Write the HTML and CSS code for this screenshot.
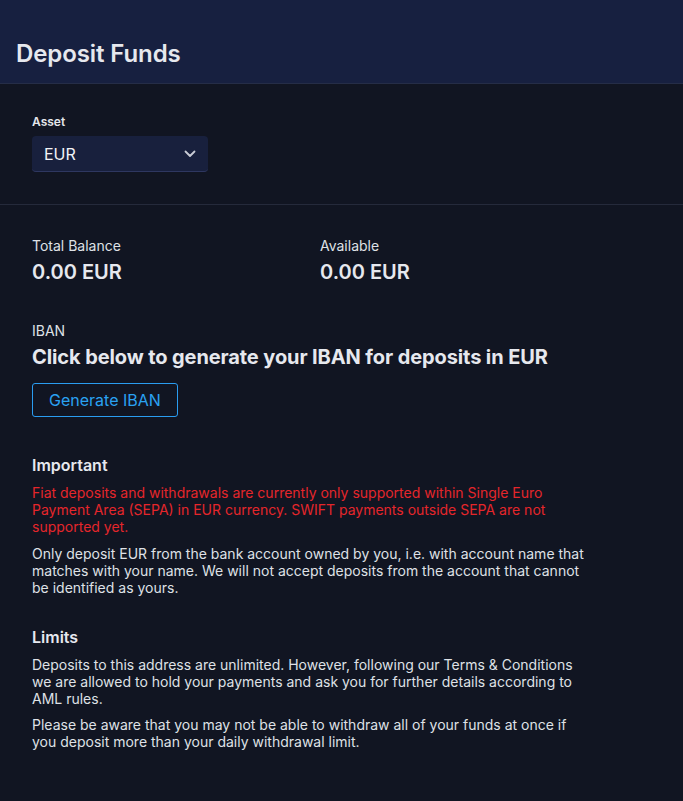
FILE: index.html
```html
<!DOCTYPE html>
<html lang="en">
<head>
<meta charset="utf-8">
<title>Deposit Funds</title>
<link rel="stylesheet" href="styles.css">
</head>
<body>
<header class="page-header">
  <h1 class="page-title">Deposit Funds</h1>
</header>
<main class="page">
  <section class="asset-section">
    <label class="field-label" for="asset">Asset</label>
    <div class="select">
      <span class="select-value">EUR</span>
      <svg class="select-caret" width="12" height="8" viewBox="0 0 12 8" aria-hidden="true"><path d="M1.5 1.5 L6 6 L10.5 1.5" fill="none" stroke="#c9ccd6" stroke-width="1.8" stroke-linecap="round" stroke-linejoin="round"/></svg>
    </div>
  </section>
  <section class="content">
    <div class="balances">
      <div class="balance">
        <div class="balance-label">Total Balance</div>
        <div class="balance-value">0.00 EUR</div>
      </div>
      <div class="balance">
        <div class="balance-label">Available</div>
        <div class="balance-value">0.00 EUR</div>
      </div>
    </div>
    <div class="iban">
      <div class="iban-label">IBAN</div>
      <h2 class="iban-title">Click below to generate your IBAN for deposits in EUR</h2>
      <button class="btn-outline" type="button">Generate IBAN</button>
    </div>
    <div class="info">
      <h3 class="info-title">Important</h3>
      <p class="text warn">Fiat deposits and withdrawals are currently only supported within Single Euro Payment Area (SEPA) in EUR currency. SWIFT payments outside SEPA are not supported yet.</p>
      <p class="text">Only deposit EUR from the bank account owned by you, i.e. with account name that matches with your name. We will not accept deposits from the account that cannot be identified as yours.</p>
    </div>
    <div class="info">
      <h3 class="info-title">Limits</h3>
      <p class="text">Deposits to this address are unlimited. However, following our Terms &amp; Conditions we are allowed to hold your payments and ask you for further details according to AML rules.</p>
      <p class="text">Please be aware that you may not be able to withdraw all of your funds at once if you deposit more than your daily withdrawal limit.</p>
    </div>
  </section>
</main>
</body>
</html>
```
FILE: styles.css
```css
* { box-sizing: border-box; }
html, body { margin: 0; padding: 0; }
body {
  background: #111522;
  color: #e4e6ea;
  font-family: Inter, "Noto Sans", sans-serif;
  min-height: 801px;
}
.page-header {
  background: #172040;
  height: 84px;
  border-bottom: 1px solid #252d47;
  display: flex;
  align-items: flex-end;
  padding: 0 16px 14px;
}
.page-title {
  margin: 0;
  font-size: 24px;
  font-weight: 600;
  line-height: 30px;
  color: #e6e8ee;
  letter-spacing: -0.1px;
}
.asset-section {
  padding: 30px 32px 32px;
  border-bottom: 1px solid #252a3b;
}
.field-label {
  display: block;
  font-size: 12px;
  font-weight: 600;
  line-height: 16px;
  color: #e4e6ea;
  margin-bottom: 6px;
}
.select {
  width: 176px;
  height: 36px;
  background: #18203d;
  border-radius: 4px;
  border-bottom: 1px solid #2e3760;
  display: flex;
  align-items: center;
  justify-content: space-between;
  padding: 0 12px 0 12px;
}
.select-value {
  font-size: 16px;
  color: #f2f3f6;
}
.content {
  padding: 32px 32px 40px;
}
.balances {
  display: grid;
  grid-template-columns: 288px 1fr;
}
.balance-label {
  font-size: 14px;
  line-height: 18px;
  color: #dfe1e6;
}
.balance-value {
  margin-top: 5px;
  font-size: 20px;
  font-weight: 600;
  line-height: 24px;
  color: #e6e8ee;
}
.iban {
  margin-top: 38px;
}
.iban-label {
  font-size: 14px;
  line-height: 18px;
  color: #dfe1e6;
}
.iban-title {
  margin: 5px 0 0;
  font-size: 20px;
  font-weight: 700;
  line-height: 24px;
  color: #e6e8ee;
  letter-spacing: -0.1px;
}
.btn-outline {
  margin-top: 14px;
  height: 34px;
  padding: 0 16px;
  background: transparent;
  border: 1px solid #2a9cf0;
  border-radius: 3px;
  color: #2aa2f2;
  font-family: Inter, "Noto Sans", sans-serif;
  font-size: 16px;
  line-height: 20px;
}
.info {
  margin-top: 38px;
  max-width: 558px;
}
.info-title {
  margin: 0 0 9px;
  font-size: 16px;
  font-weight: 600;
  line-height: 20px;
  color: #e6e8ee;
}
.text {
  margin: 0 0 9px;
  font-size: 14px;
  line-height: 17px;
  color: #dfe1e6;
}
.text.warn {
  color: #e5262b;
  margin-bottom: 10px;
}
.info + .info {
  margin-top: 31px;
}
```
